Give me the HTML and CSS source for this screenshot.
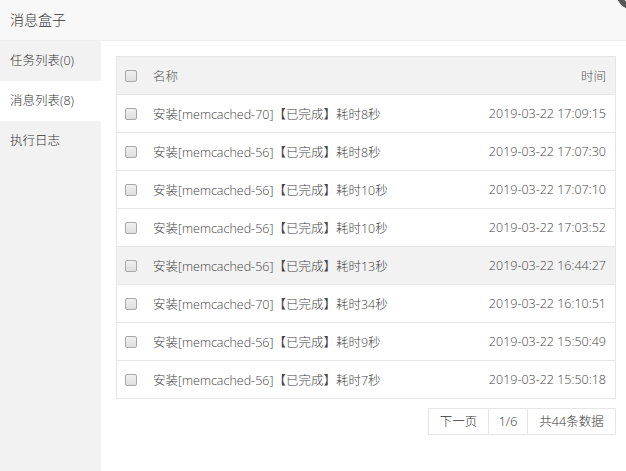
FILE: index.html
```html
<!DOCTYPE html>
<html lang="zh">
<head>
<meta charset="utf-8">
<title>消息盒子</title>
<link rel="stylesheet" href="styles.css">
</head>
<body>
<div class="layer">
  <div class="title">消息盒子</div>
  <span class="close"><svg width="30" height="30" viewBox="0 0 30 30"><circle cx="15" cy="15" r="14.5" fill="#575757" stroke="#fff" stroke-width="1"/><path d="M10 10 L20 20 M20 10 L10 20" stroke="#fff" stroke-width="2.2" stroke-linecap="round"/></svg></span>
  <div class="main">
    <ul class="tabs">
      <li class="tab">任务列表(0)</li>
      <li class="tab active">消息列表(8)</li>
      <li class="tab">执行日志</li>
    </ul>
    <div class="content">
      <div class="table">
        <div class="row head">
          <span class="cb"></span>
          <span class="name">名称</span>
          <span class="time">时间</span>
        </div>
        <div class="row"><span class="cb"></span><span class="name">安装[memcached-70]【已完成】耗时8秒</span><span class="time">2019-03-22 17:09:15</span></div>
        <div class="row"><span class="cb"></span><span class="name">安装[memcached-56]【已完成】耗时8秒</span><span class="time">2019-03-22 17:07:30</span></div>
        <div class="row"><span class="cb"></span><span class="name">安装[memcached-56]【已完成】耗时10秒</span><span class="time">2019-03-22 17:07:10</span></div>
        <div class="row"><span class="cb"></span><span class="name">安装[memcached-56]【已完成】耗时10秒</span><span class="time">2019-03-22 17:03:52</span></div>
        <div class="row hover"><span class="cb"></span><span class="name">安装[memcached-56]【已完成】耗时13秒</span><span class="time">2019-03-22 16:44:27</span></div>
        <div class="row"><span class="cb"></span><span class="name">安装[memcached-70]【已完成】耗时34秒</span><span class="time">2019-03-22 16:10:51</span></div>
        <div class="row"><span class="cb"></span><span class="name">安装[memcached-56]【已完成】耗时9秒</span><span class="time">2019-03-22 15:50:49</span></div>
        <div class="row"><span class="cb"></span><span class="name">安装[memcached-56]【已完成】耗时7秒</span><span class="time">2019-03-22 15:50:18</span></div>
      </div>
      <div class="pager">
        <span class="pg next">下一页</span>
        <span class="pg num">1/6</span>
        <span class="pg total">共44条数据</span>
      </div>
    </div>
  </div>
</div>
</body>
</html>
```
FILE: styles.css
```css
* { box-sizing: border-box; }
html, body { margin: 0; padding: 0; background: #fff; }
body {
  font-family: "Open Sans", "Noto Sans CJK SC", sans-serif;
  font-size: 12.5px;
  font-weight: 300;
  color: #333;
  overflow: hidden;
}
.layer { position: relative; width: 626px; height: 471px; }
.title {
  height: 41px;
  line-height: 40px;
  padding-left: 10px;
  font-size: 14px;
  color: #333;
  background: #f8f8f8;
  border-bottom: 1px solid #eee;
}
.close {
  position: absolute;
  left: 616px;
  top: -20px;
  width: 30px;
  height: 30px;
}
.close svg { display: block; }
.main { display: flex; height: 430px; }
.tabs {
  list-style: none;
  margin: 0;
  padding: 0;
  width: 101px;
  background: #f2f2f2;
  flex: none;
}
.tab {
  height: 40px;
  line-height: 40px;
  padding-left: 10px;
  color: #333;
}
.tab.active { background: #fff; }
.content { flex: 1; padding: 15px 10px 0 15px; }
.table { border: 1px solid #e6e6e6; border-bottom: none; }
.row {
  display: flex;
  align-items: center;
  height: 38px;
  padding: 0 9px 0 8px;
  border-bottom: 1px solid #e6e6e6;
  color: #444;
}
.row.head { background: #f2f2f2; height: 38px; color: #555; }
.row.hover { background: #f2f2f2; }
.cb {
  width: 12px;
  height: 12px;
  border: 1px solid #a9a9a9;
  border-radius: 2px;
  background: linear-gradient(#f0f0f0, #dedede);
  flex: none;
  margin-right: 16px;
}
.name { flex: 1; white-space: nowrap; }
.time { white-space: nowrap; }
.pager {
  display: flex;
  justify-content: flex-end;
  margin-top: 9px;
}
.pg {
  height: 27px;
  line-height: 26px;
  border: 1px solid #e6e6e6;
  margin-left: -1px;
  color: #333;
  text-align: center;
}
.next { width: 61px; }
.num { width: 40px; }
.total { width: 89px; }
```
